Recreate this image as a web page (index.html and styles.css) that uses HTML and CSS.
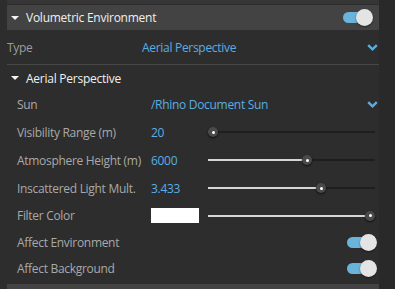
FILE: index.html
```html
<!DOCTYPE html>
<html>
<head>
<meta charset="utf-8">
<link rel="stylesheet" href="styles.css">
</head>
<body>
<div class="page">
  <div class="main">
    <div class="strip"></div>
    <div class="sec-head">
      <span class="tri"></span>
      <span class="sec-title">Volumetric Environment</span>
      <span class="toggle head-toggle"><span class="knob"></span></span>
    </div>
    <div class="type-row">
      <span class="type-label">Type</span>
      <span class="type-value">Aerial Perspective</span>
      <svg class="chev" width="11" height="7" viewBox="0 0 11 7"><path d="M1.2 1.2 L5.5 5.3 L9.8 1.2" fill="none" stroke="#5aaee3" stroke-width="2.4"/></svg>
    </div>
    <div class="sub-head">
      <span class="tri"></span>
      <span class="sub-title">Aerial Perspective</span>
    </div>
    <div class="row r-sun">
      <span class="label">Sun</span>
      <span class="value wide">/Rhino Document Sun</span>
      <svg class="chev" width="11" height="7" viewBox="0 0 11 7"><path d="M1.2 1.2 L5.5 5.3 L9.8 1.2" fill="none" stroke="#5aaee3" stroke-width="2.4"/></svg>
    </div>
    <div class="row r28">
      <span class="label">Visibility Range (m)</span>
      <span class="value">20</span>
      <div class="slider"><div class="fill" style="width:5px"></div><span class="thumb" style="left:5px"></span></div>
    </div>
    <div class="row r28">
      <span class="label">Atmosphere Height (m)</span>
      <span class="value">6000</span>
      <div class="slider"><div class="fill" style="width:99px"></div><span class="thumb" style="left:99px"></span></div>
    </div>
    <div class="row r28">
      <span class="label">Inscattered Light Mult.</span>
      <span class="value">3.433</span>
      <div class="slider"><div class="fill" style="width:113px"></div><span class="thumb" style="left:113px"></span></div>
    </div>
    <div class="row r27">
      <span class="label">Filter Color</span>
      <span class="value"><span class="swatch"></span></span>
      <div class="slider"><div class="fill" style="width:162px"></div><span class="thumb" style="left:162px"></span></div>
    </div>
    <div class="row r26">
      <span class="label">Affect Environment</span>
      <span class="toggle row-toggle"><span class="knob"></span></span>
    </div>
    <div class="row r26">
      <span class="label">Affect Background</span>
      <span class="toggle row-toggle"><span class="knob"></span></span>
    </div>
    <div class="next-head"></div>
  </div>
</div>
</body>
</html>
```

FILE: styles.css
```css
html, body {
  margin: 0;
  padding: 0;
  background: #292929;
}
body {
  font-family: "Open Sans", "Noto Sans", sans-serif;
  font-size: 12px;
  letter-spacing: -0.3px;
  width: 395px;
  height: 289px;
  overflow: hidden;
}
.page {
  display: flex;
  height: 289px;
}
.main {
  width: 379px;
  background: #2d2d2d;
  padding-left: 7px;
  box-sizing: border-box;
  display: flex;
  flex-direction: column;
}
.strip {
  height: 4px;
  background: #363636;
  margin-bottom: 1px;
  flex: none;
}
.sec-head {
  height: 25px;
  background: #434343;
  display: flex;
  align-items: center;
  flex: none;
}
.tri {
  width: 0;
  height: 0;
  border-left: 4px solid transparent;
  border-right: 4px solid transparent;
  border-top: 4px solid #f2f2f2;
  margin-left: 4px;
  margin-right: 7px;
}
.sec-title, .sub-title {
  color: #f0f0f0;
  font-size: 12px;
  letter-spacing: -0.25px;
}
.toggle {
  position: relative;
  width: 30px;
  height: 17px;
  margin-left: auto;
  display: block;
}
.toggle::before {
  content: "";
  position: absolute;
  left: 0;
  right: 5px;
  top: 3px;
  height: 11px;
  border-radius: 6px;
  background: #6ab3da;
}
.knob {
  position: absolute;
  right: 0;
  top: 0;
  width: 17px;
  height: 17px;
  border-radius: 50%;
  background: #e4e4e4;
  box-shadow: 0 1px 2px rgba(0,0,0,0.45);
}
.head-toggle {
  margin-right: 6px;
}
.type-row {
  height: 34px;
  border-bottom: 1px solid #474747;
  display: flex;
  align-items: center;
  flex: none;
}
.type-label {
  color: #9c9c9c;
  width: 135px;
}
.type-value {
  color: #5aaee3;
}
.chev {
  margin-left: auto;
  margin-right: 1px;
}
.sub-head {
  height: 26px;
  display: flex;
  align-items: center;
  flex: none;
}
.row {
  display: flex;
  align-items: center;
  padding-left: 10px;
  flex: none;
}
.r-sun { height: 27px; }
.r28 { height: 28px; }
.r27 { height: 27px; }
.r26 { height: 26px; }
.label {
  color: #a9a9a9;
  width: 134px;
  flex: none;
}
.value {
  color: #5aaee3;
  width: 57px;
  flex: none;
}
.value.wide {
  width: auto;
}
.swatch {
  display: block;
  width: 48px;
  height: 15px;
  background: #ffffff;
}
.slider {
  position: relative;
  width: 167px;
  height: 2px;
  background: #1e1e1e;
}
.fill {
  height: 2px;
  background: #d6d6d6;
}
.thumb {
  position: absolute;
  top: 1px;
  width: 10px;
  height: 10px;
  margin-left: -5px;
  margin-top: -5px;
  border-radius: 50%;
  background: #4a4a4a;
  box-shadow: 0 1px 2px rgba(0,0,0,0.7);
}
.thumb::after {
  content: "";
  position: absolute;
  left: 3.5px;
  top: 3.5px;
  width: 3px;
  height: 3px;
  border-radius: 50%;
  background: #ffffff;
}
.row-toggle {
  margin-right: 2px;
}
.next-head {
  margin-top: 3px;
  height: 10px;
  background: #434343;
  flex: none;
}
```
